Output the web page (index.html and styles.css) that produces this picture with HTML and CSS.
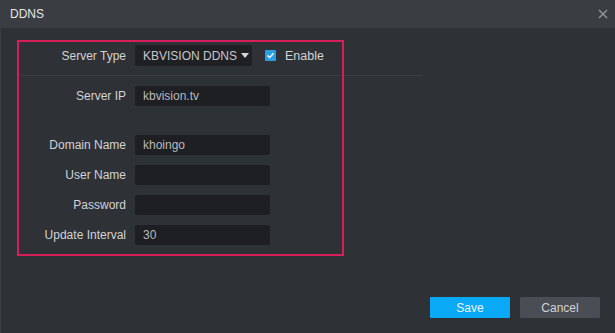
FILE: index.html
```html
<!DOCTYPE html>
<html lang="en">
<head>
    <meta charset="UTF-8">
    <meta name="viewport" content="width=device-width, initial-scale=1.0">
    <title>DDNS</title>
    <link rel="stylesheet" href="styles.css">
</head>
<body>
    <div class="dialog">
        <div class="titlebar">
            <span class="title">DDNS</span>
            <svg class="close" width="10" height="10" viewBox="0 0 10 10">
                <path d="M1 1 L9 9 M9 1 L1 9" stroke="#8e9094" stroke-width="1.6"/>
            </svg>
        </div>

        <div class="content">
            <div class="form">
                <div class="row">
                    <label>Server Type</label>
                    <div class="select">
                        KBVISION DDNS
                        <svg class="arrow" width="8" height="5" viewBox="0 0 8 5">
                            <path d="M0 0 H8 L4 5 Z" fill="#d6d7d9"/>
                        </svg>
                    </div>
                    <span class="check">
                        <svg width="11" height="11" viewBox="0 0 11 11">
                            <rect x="0" y="0" width="11" height="11" rx="1" fill="#2a9ee0"/>
                            <path d="M2.5 5.6 L4.6 7.6 L8.5 3.2" stroke="#fff" stroke-width="1.4" fill="none"/>
                        </svg>
                        Enable
                    </span>
                </div>
                <div class="sep"></div>
                <div class="fields">
                    <div class="row gap-after">
                        <label>Server IP</label>
                        <div class="input">kbvision.tv</div>
                    </div>
                    <div class="row">
                        <label>Domain Name</label>
                        <div class="input">khoingo</div>
                    </div>
                    <div class="row">
                        <label>User Name</label>
                        <div class="input"></div>
                    </div>
                    <div class="row">
                        <label>Password</label>
                        <div class="input"></div>
                    </div>
                    <div class="row">
                        <label>Update Interval</label>
                        <div class="input">30</div>
                    </div>
                </div>
            </div>

            <!-- highlight marker drawn over the form -->
            <div class="highlight"></div>
        </div>

        <div class="footer">
            <button class="btn save">Save</button>
            <button class="btn cancel">Cancel</button>
        </div>
    </div>
</body>
</html>
```

FILE: styles.css
```css
/* General Style */
body {
    margin: 0;
    padding: 0;
    font-family: 'Liberation Sans', Arial, sans-serif;
    font-size: 12px;
    background-color: #2e3135;
    color: #cfd0d2;
}

.dialog {
    height: 333px;
    display: flex;
    flex-direction: column;
    background-color: #2e3135;
    border-left: 1px solid #3a3d42;
    box-sizing: border-box;
}

/* Title bar */
.titlebar {
    height: 28px;
    display: flex;
    align-items: center;
    justify-content: space-between;
    padding: 0 7px 0 9px;
    background-color: #3a3d42;
}

.title {
    color: #e6e7e8;
    font-size: 12px;
}

/* Content */
.content {
    position: relative;
    padding: 17px 0 0 19px;
}

.form {
    width: 403px;
}

.row {
    display: flex;
    align-items: center;
    height: 21px;
}

.row label {
    width: 106px;
    padding-right: 9px;
    text-align: right;
    color: #d2d3d5;
}

.select {
    display: flex;
    align-items: center;
    width: 117px;
    height: 21px;
    box-sizing: border-box;
    padding-left: 8px;
    background-color: #1e2024;
    border-radius: 2px;
    color: #c6c7c9;
    font-size: 12px;
    white-space: nowrap;
}

.arrow {
    margin-left: 4px;
}

.check {
    display: flex;
    align-items: center;
    margin-left: 13px;
    color: #d2d3d5;
    font-size: 12.5px;
}

.check svg {
    margin-right: 9px;
}

.sep {
    margin-top: 9px;
    border-top: 1px solid #3b3e43;
}

.fields {
    display: flex;
    flex-direction: column;
    gap: 10px;
    padding-top: 10px;
}

.fields .row {
    height: 20px;
}

.gap-after {
    margin-bottom: 19px;
}

.input {
    width: 135px;
    height: 20px;
    line-height: 20px;
    box-sizing: border-box;
    padding-left: 8px;
    background-color: #1d1f23;
    border-radius: 2px;
    color: #b9babc;
}

.highlight {
    position: absolute;
    left: 16px;
    top: 12px;
    width: 323px;
    height: 212px;
    border: 2px solid #d81d5b;
}

/* Footer */
.footer {
    margin-top: auto;
    display: flex;
    justify-content: flex-end;
    gap: 10px;
    padding: 0 15px 15px 0;
}

.btn {
    width: 80px;
    height: 21px;
    border: none;
    border-radius: 1px;
    font-family: 'Liberation Sans', Arial, sans-serif;
    font-size: 12px;
    cursor: pointer;
}

.save {
    background-color: #0aa9f6;
    color: #e8f6ff;
}

.cancel {
    background-color: #4a4d53;
    color: #d2d3d5;
}
```
